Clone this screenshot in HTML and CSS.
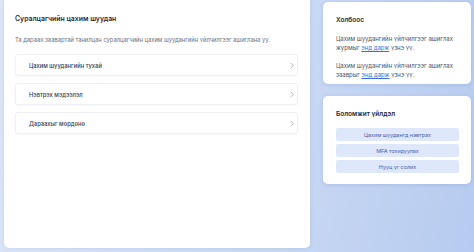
FILE: index.html
```html
<!DOCTYPE html>
<html lang="mn">
<head>
  <meta charset="UTF-8">
  <title>Суралцагчийн цахим шуудан</title>
  <meta name="viewport" content="width=device-width, initial-scale=1.0">
  <link rel="stylesheet" href="styles.css">
</head>
<body>
  <div class="page">
    <div class="main-card">
      <h2>Суралцагчийн цахим шуудан</h2>
      <p class="desc">Та дараах заавартай танилцан суралцагчийн цахим шуудангийн үйлчилгээг ашиглана уу.</p>
      <div class="item">
        <span>Цахим шуудангийн тухай</span>
        <svg class="chev" viewBox="0 0 6 10" width="4" height="7"><path d="M1 1l4 4-4 4" fill="none" stroke="#9ca3af" stroke-width="1.2"/></svg>
      </div>
      <div class="item">
        <span>Нэвтрэх мэдээлэл</span>
        <svg class="chev" viewBox="0 0 6 10" width="4" height="7"><path d="M1 1l4 4-4 4" fill="none" stroke="#9ca3af" stroke-width="1.2"/></svg>
      </div>
      <div class="item">
        <span>Дараахыг мөрдөнө</span>
        <svg class="chev" viewBox="0 0 6 10" width="4" height="7"><path d="M1 1l4 4-4 4" fill="none" stroke="#9ca3af" stroke-width="1.2"/></svg>
      </div>
    </div>

    <div class="side">
      <div class="side-card">
        <h3>Холбоос</h3>
        <p>Цахим шуудангийн үйлчилгээг ашиглах журмыг <a href="#">энд дарж</a> үзнэ үү.</p>
        <p>Цахим шуудангийн үйлчилгээг ашиглах зааврыг <a href="#">энд дарж</a> үзнэ үү.</p>
      </div>
      <div class="side-card">
        <h3>Боломжит үйлдэл</h3>
        <div class="actions">
          <button class="act">Цахим шуудангд нэвтрэх</button>
          <button class="act">MFA тохируулах</button>
          <button class="act">Нууц үг солих</button>
        </div>
      </div>
    </div>
  </div>
</body>
</html>
```

FILE: styles.css
```css
html, body {
  margin: 0;
  padding: 0;
  height: 100%;
}
body {
  background: linear-gradient(100deg, #dde6f7 0%, #c9d8f3 60%, #b6cbf0 100%);
  font-family: Inter, "Noto Sans", sans-serif;
  color: #1f2937;
}
.page {
  display: flex;
  gap: 13px;
  height: 252px;
  box-sizing: border-box;
  padding: 0 3px 4px 4px;
}
.main-card {
  width: 306px;
  background: #fff;
  border-radius: 0 0 5px 5px;
  box-sizing: border-box;
  padding: 14px 12px 0 11px;
  box-shadow: 0 0 4px rgba(80, 110, 170, 0.15);
}
.main-card h2 {
  margin: 0;
  font-size: 6.9px;
  font-weight: 600;
  color: #1f2937;
}
.desc {
  margin: 13px 0 11px;
  font-size: 5.8px;
  color: #6b7280;
  white-space: nowrap;
}
.item {
  display: flex;
  align-items: center;
  justify-content: space-between;
  height: 22px;
  box-sizing: border-box;
  padding: 0 3px 0 13px;
  margin-bottom: 7px;
  border: 1px solid #eef0f4;
  border-radius: 3px;
  box-shadow: 0 1px 2px rgba(0, 0, 0, 0.04);
  font-size: 5.8px;
  font-weight: 500;
  color: #374151;
}
.side {
  width: 148px;
  display: flex;
  flex-direction: column;
  gap: 12px;
  padding-top: 2px;
}
.side-card {
  background: #fff;
  border-radius: 5px;
  padding: 14px 12px 5px 13px;
  box-shadow: 0 1px 4px rgba(80, 110, 170, 0.18);
}
.side-card h3 {
  margin: 0 0 10px;
  font-size: 6.5px;
  font-weight: 600;
  color: #1f2937;
}
.side-card p {
  margin: 0 0 9px;
  font-size: 6px;
  line-height: 9px;
  color: #4b5563;
}
.side-card p:last-child {
  margin-bottom: 0;
}
.side-card a {
  color: #3b6fd8;
}
.actions {
  display: flex;
  flex-direction: column;
  gap: 3px;
  padding-bottom: 6px;
}
.act {
  border: none;
  border-radius: 2px;
  background: #dfe7fb;
  color: #4a5ea8;
  font-family: Inter, "Noto Sans", sans-serif;
  font-size: 5.4px;
  height: 13px;
  padding: 0;
}
```
